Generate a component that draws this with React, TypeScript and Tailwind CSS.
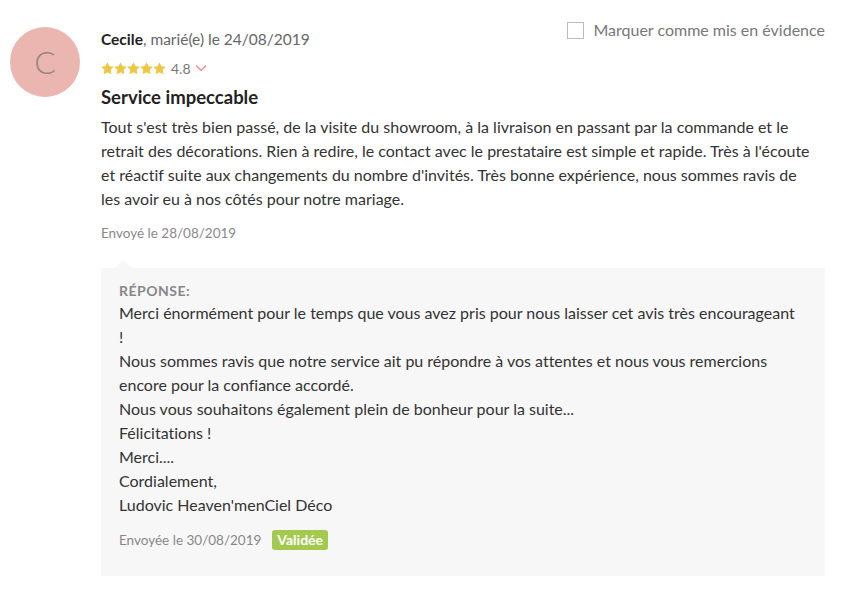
import React from "react";

const Star = () => (
  <svg width="13" height="13" viewBox="0 0 24 24" className="block">
    <path
      d="M12 0.3l3.6 7.4 8.1 1.1-5.9 5.7 1.4 8.1L12 18.8l-7.2 3.8 1.4-8.1L0.3 8.8l8.1-1.1z"
      fill="#f0c541"
    />
  </svg>
);

const body = [
  "Tout s'est très bien passé, de la visite du showroom, à la livraison en passant par la commande et le",
  "retrait des décorations. Rien à redire, le contact avec le prestataire est simple et rapide. Très à l'écoute",
  "et réactif suite aux changements du nombre d'invités. Très bonne expérience, nous sommes ravis de",
  "les avoir eu à nos côtés pour notre mariage.",
];

const reply = [
  "Merci énormément pour le temps que vous avez pris pour nous laisser cet avis très encourageant",
  "!",
  "Nous sommes ravis que notre service ait pu répondre à vos attentes et nous vous remercions",
  "encore pour la confiance accordé.",
  "Nous vous souhaitons également plein de bonheur pour la suite...",
  "Félicitations !",
  "Merci....",
  "Cordialement,",
  "Ludovic Heaven'menCiel Déco",
];

export default function App() {
  return (
    <div
      className="w-[842px] h-[595px] bg-white text-[#222222] overflow-hidden [font-variant-ligatures:none]"
      style={{ fontFamily: "Lato, 'Open Sans', sans-serif" }}
    >
      <div className="flex pl-[10px] pr-[17px] pt-[27px]">
        <div className="w-[70px] h-[70px] rounded-full bg-[#eab6af] flex items-center justify-center shrink-0">
          <span className="text-[32px] font-light text-[#9b8380] leading-none">C</span>
        </div>
        <div className="ml-[21px] flex-1 flex flex-col">
          <div className="flex justify-between items-start">
            <div className="flex flex-col">
              <div className="text-[15.5px] leading-[24px] mt-[0px]">
                <span className="font-bold text-[#222]">Cecile</span>
                <span className="text-[#666]">, marié(e) le 24/08/2019</span>
              </div>
              <div className="flex items-center mt-[9px] h-[16px]">
                <div className="flex">
                  <Star />
                  <Star />
                  <Star />
                  <Star />
                  <Star />
                </div>
                <span className="ml-[5px] text-[14px] text-[#777]">4.8</span>
                <svg width="12" height="8" viewBox="0 0 12 8" className="ml-[4px]">
                  <path d="M1 1.5l5 5 5-5" stroke="#f08080" strokeWidth="1.2" fill="none" />
                </svg>
              </div>
            </div>
            <div className="flex items-center mt-[-9px]">
              <div className="w-[17px] h-[17px] border border-[#bbbbbb] bg-white" />
              <span className="ml-[9px] text-[16px] text-[#777]">Marquer comme mis en évidence</span>
            </div>
          </div>
          <div className="text-[18.5px] font-bold leading-[24px] mt-[9px] text-[#222]">Service impeccable</div>
          <div className="mt-[6px] text-[16px] leading-[24px] text-[#333]">
            {body.map((l, i) => (
              <div key={i} className="whitespace-nowrap">{l}</div>
            ))}
          </div>
          <div className="mt-[12px] text-[13.5px] leading-[20px] text-[#888]">Envoyé le 28/08/2019</div>
          <div className="relative mt-[25px] bg-[#f7f7f7] px-[18px] pt-[13px] pb-[26px]">
            <div className="absolute left-[14px] top-[-8px] w-0 h-0 border-l-[8px] border-r-[8px] border-b-[8px] border-l-transparent border-r-transparent border-b-[#f7f7f7]" />
            <div className="text-[14px] font-bold uppercase tracking-[0.5px] text-[#888] leading-[20px]">Réponse:</div>
            <div className="text-[16px] leading-[24px] text-[#333]">
              {reply.map((l, i) => (
                <div key={i} className="whitespace-nowrap">{l}</div>
              ))}
            </div>
            <div className="flex items-center mt-[13px]">
              <span className="text-[13.5px] text-[#888]">Envoyée le 30/08/2019</span>
              <span className="ml-[11px] bg-[#a4c94f] text-white text-[14px] font-bold rounded-[3px] px-[5px] leading-[20px]">Validée</span>
            </div>
          </div>
        </div>
      </div>
    </div>
  );
}
